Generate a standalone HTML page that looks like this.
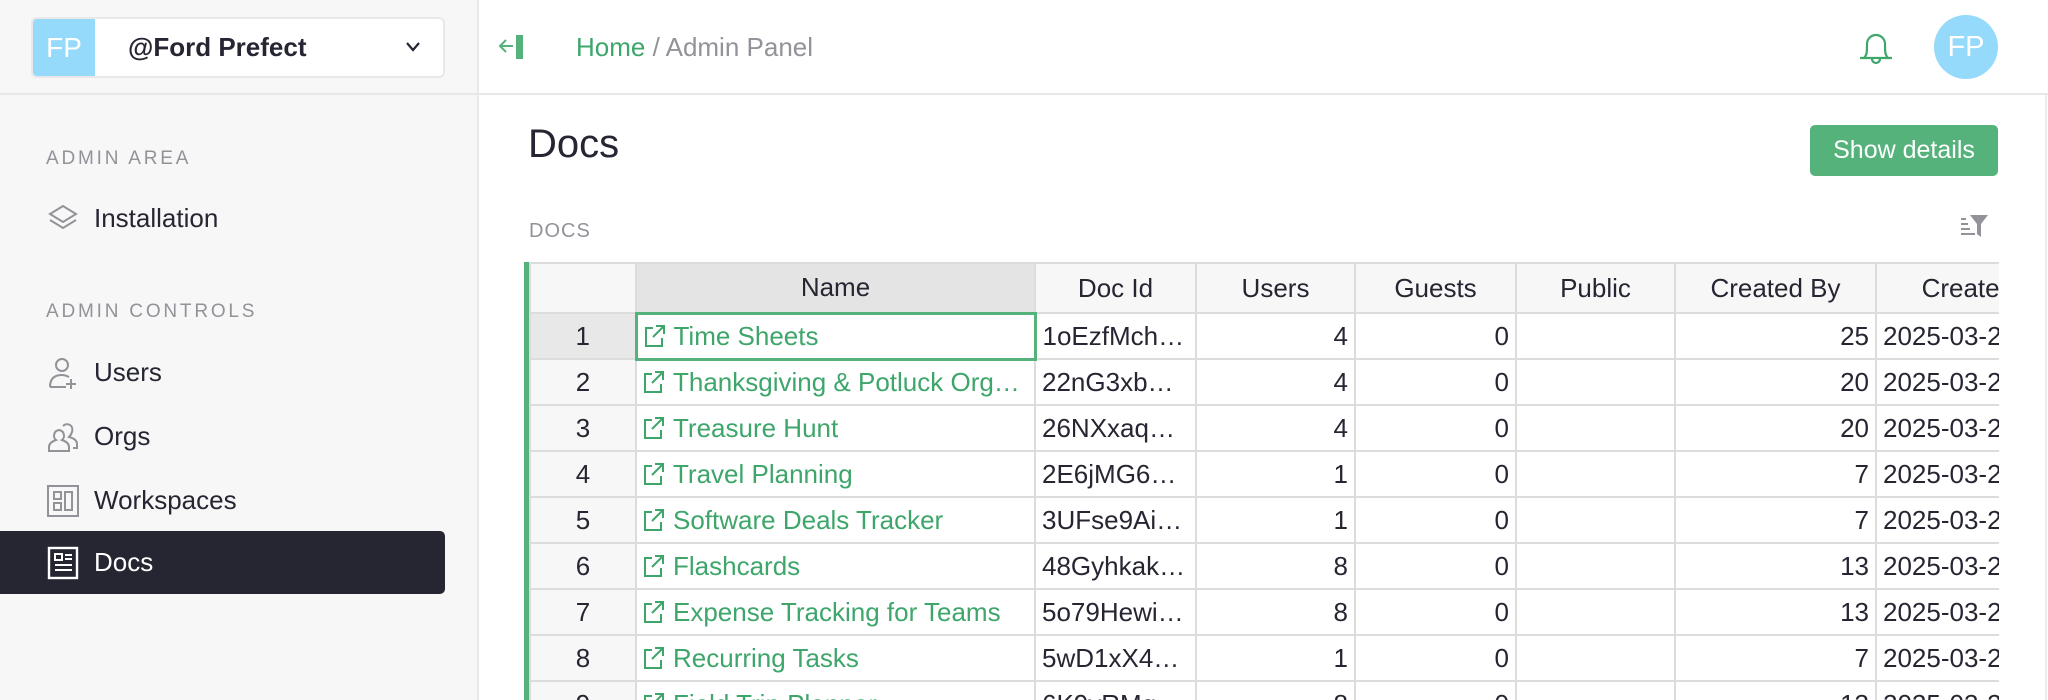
<!DOCTYPE html>
<html><head><meta charset="utf-8"><style>
*{box-sizing:border-box;margin:0;padding:0}
body{width:2048px;height:700px;overflow:hidden;background:#fff;font-family:"Liberation Sans",sans-serif;color:#262633;position:relative}
.abs{position:absolute}
#side{left:0;top:0;width:479px;height:700px;background:#f7f7f7;border-right:2px solid #e8e8e8}
.hdrline{left:0;top:93px;width:2048px;height:2px;background:#e8e8e8}
.sec{font-size:19px;letter-spacing:2.8px;color:#929299;left:46px}
.item{left:0;width:445px;height:63px;font-size:26px;display:flex;align-items:center;padding-left:46px}
.item svg{width:34px;height:34px;margin-right:14px}
.item.act{background:#262633;color:#fff;border-radius:0 5px 5px 0}
table{position:absolute;left:0;top:0;border-collapse:collapse;table-layout:fixed;font-size:26px}
td,th{border:2px solid #dcdcdc;height:46px;white-space:nowrap;overflow:hidden;padding:0 6px;font-weight:normal}
th{background:#f7f7f7;height:50px;border-top:2px solid #dcdcdc}
td.n{background:#f7f7f7;text-align:center}
td.r{text-align:right}
td.g{color:#3ea66b}
td.g svg{width:22px;height:24px;vertical-align:-3px;margin-right:8px}
</style></head><body>
<div id="side" class="abs"></div>
<div class="abs hdrline"></div>
<div class="abs" style="left:2045px;top:95px;width:2px;height:605px;background:#ececec"></div>
<div class="abs" style="left:31px;top:17px;width:414px;height:61px;background:#fff;border:2px solid #e8e8e8;border-radius:6px;overflow:hidden">
<div class="abs" style="left:0;top:0;width:62px;height:57px;background:#95d9fb;color:#fff;font-size:28px;line-height:57px;text-align:center">FP</div>
<div class="abs" style="left:95px;top:0;line-height:57px;font-size:26px;font-weight:bold;color:#262633">@Ford Prefect</div>
<svg class="abs" style="left:372px;top:22px" width="16" height="12" viewBox="0 0 16 12"><path d="M2 2l6 7 6-7" fill="none" stroke="#262633" stroke-width="2.2"/></svg>
</div>
<svg class="abs" style="left:498px;top:34px" width="28" height="26" viewBox="0 0 28 26"><path d="M3 12h12M8 6l-6 6 6 6" fill="none" stroke="#55b27b" stroke-width="2"/><rect x="18" y="1" width="7" height="24" fill="#55b27b"/></svg>
<div class="abs" style="left:576px;top:32px;font-size:26px;color:#929299"><span style="color:#3ea66b">Home</span> / Admin Panel</div>
<svg class="abs" style="left:1856px;top:28px" width="40" height="38" viewBox="0 0 40 38"><path d="M4 30h32M8 30c3-3 3-6 3-14a9 9 0 0 1 18 0c0 8 0 11 3 14M16 31a4 4 0 0 0 8 0" fill="none" stroke="#3ea66b" stroke-width="2.2"/></svg>
<div class="abs" style="left:1934px;top:15px;width:64px;height:64px;border-radius:50%;background:#95d9fb;color:#fff;font-size:29px;line-height:64px;text-align:center">FP</div>
<div class="abs sec" style="top:148px">ADMIN AREA</div>
<div class="abs item" style="top:187px"><svg viewBox="0 0 34 34"><path d="M17 4L4 12l13 8 13-8zM4 18l13 8 13-8" fill="none" stroke="#929299" stroke-width="2"/></svg>Installation</div>
<div class="abs sec" style="top:301px">ADMIN CONTROLS</div>
<div class="abs item" style="top:341px"><svg viewBox="0 0 34 34"><circle cx="16" cy="9" r="6" fill="none" stroke="#929299" stroke-width="2"/><path d="M4 31c0-8 4-12 12-12 3 0 5 1 7 2M4 31h16M25 23v10M20 28h10" fill="none" stroke="#929299" stroke-width="2"/></svg>Users</div>
<div class="abs item" style="top:405px"><svg viewBox="0 0 34 34"><path d="M3 31v-4c0-4 4-6 7-7-3-2-3-9 3-10 6 1 6 8 3 10 3 1 7 3 7 7v4zM17 6c4-4 11-1 9 6-1 3-2 4-3 5 4 1 8 3 8 7v4h-4" fill="none" stroke="#929299" stroke-width="2"/></svg>Orgs</div>
<div class="abs item" style="top:469px"><svg viewBox="0 0 34 34"><rect x="2" y="2" width="30" height="30" fill="none" stroke="#929299" stroke-width="2"/><rect x="8" y="8" width="7" height="7" fill="none" stroke="#929299" stroke-width="2"/><rect x="8" y="19" width="7" height="7" fill="none" stroke="#929299" stroke-width="2"/><rect x="19" y="8" width="7" height="18" fill="none" stroke="#929299" stroke-width="2"/></svg>Workspaces</div>
<div class="abs item act" style="top:531px"><svg viewBox="0 0 34 34"><rect x="3" y="2" width="28" height="30" fill="none" stroke="#fff" stroke-width="2.4"/><rect x="9" y="8" width="7" height="6" fill="none" stroke="#fff" stroke-width="2"/><path d="M19 9h7M19 13h7M9 19h17M9 24h17" stroke="#fff" stroke-width="2"/></svg>Docs</div>
<div class="abs" style="left:528px;top:122px;font-size:40px;font-weight:500">Docs</div>
<div class="abs" style="left:1810px;top:125px;width:188px;height:51px;background:#55b27b;border-radius:5px;color:#fff;font-size:25px;line-height:51px;text-align:center">Show details</div>
<div class="abs" style="left:529px;top:220px;font-size:20px;color:#929299;letter-spacing:1px">DOCS</div>
<svg class="abs" style="left:1960px;top:214px" width="30" height="26" viewBox="0 0 30 26"><path d="M1 5h5M1 10h7M1 15h9M1 20h14" stroke="#929299" stroke-width="2"/><path d="M10 1h18l-7 9v13l-4-3V10z" fill="#929299"/></svg>
<div class="abs" style="left:524px;top:262px;width:5px;height:438px;background:#55b27b"></div>
<div class="abs" style="left:529px;top:262px;width:1470px;height:438px;overflow:hidden">
<table style="width:1560px">
<colgroup><col style="width:106px"><col style="width:399px"><col style="width:161px"><col style="width:159px"><col style="width:161px"><col style="width:159px"><col style="width:201px"><col style="width:214px"></colgroup>
<tr><th></th><th style="background:#e4e4e4">Name</th><th>Doc Id</th><th>Users</th><th>Guests</th><th>Public</th><th>Created By</th><th>Created At</th></tr>
<tr><td class="n" style="background:#e8e8e8">1</td><td class="g" style="border:3px solid #55b27b"><svg viewBox="0 0 22 24"><path d="M9 4H2v18h16v-8M12 2h8v8M20 2L9 13" fill="none" stroke="#3ea66b" stroke-width="2"/></svg>Time Sheets</td><td>1oEzfMch…</td><td class="r">4</td><td class="r">0</td><td></td><td class="r">25</td><td>2025-03-2</td></tr>
<tr><td class="n">2</td><td class="g"><svg viewBox="0 0 22 24"><path d="M9 4H2v18h16v-8M12 2h8v8M20 2L9 13" fill="none" stroke="#3ea66b" stroke-width="2"/></svg>Thanksgiving &amp; Potluck Org…</td><td>22nG3xb…</td><td class="r">4</td><td class="r">0</td><td></td><td class="r">20</td><td>2025-03-2</td></tr>
<tr><td class="n">3</td><td class="g"><svg viewBox="0 0 22 24"><path d="M9 4H2v18h16v-8M12 2h8v8M20 2L9 13" fill="none" stroke="#3ea66b" stroke-width="2"/></svg>Treasure Hunt</td><td>26NXxaq…</td><td class="r">4</td><td class="r">0</td><td></td><td class="r">20</td><td>2025-03-2</td></tr>
<tr><td class="n">4</td><td class="g"><svg viewBox="0 0 22 24"><path d="M9 4H2v18h16v-8M12 2h8v8M20 2L9 13" fill="none" stroke="#3ea66b" stroke-width="2"/></svg>Travel Planning</td><td>2E6jMG6…</td><td class="r">1</td><td class="r">0</td><td></td><td class="r">7</td><td>2025-03-2</td></tr>
<tr><td class="n">5</td><td class="g"><svg viewBox="0 0 22 24"><path d="M9 4H2v18h16v-8M12 2h8v8M20 2L9 13" fill="none" stroke="#3ea66b" stroke-width="2"/></svg>Software Deals Tracker</td><td>3UFse9Ai…</td><td class="r">1</td><td class="r">0</td><td></td><td class="r">7</td><td>2025-03-2</td></tr>
<tr><td class="n">6</td><td class="g"><svg viewBox="0 0 22 24"><path d="M9 4H2v18h16v-8M12 2h8v8M20 2L9 13" fill="none" stroke="#3ea66b" stroke-width="2"/></svg>Flashcards</td><td>48Gyhkak…</td><td class="r">8</td><td class="r">0</td><td></td><td class="r">13</td><td>2025-03-2</td></tr>
<tr><td class="n">7</td><td class="g"><svg viewBox="0 0 22 24"><path d="M9 4H2v18h16v-8M12 2h8v8M20 2L9 13" fill="none" stroke="#3ea66b" stroke-width="2"/></svg>Expense Tracking for Teams</td><td>5o79Hewi…</td><td class="r">8</td><td class="r">0</td><td></td><td class="r">13</td><td>2025-03-2</td></tr>
<tr><td class="n">8</td><td class="g"><svg viewBox="0 0 22 24"><path d="M9 4H2v18h16v-8M12 2h8v8M20 2L9 13" fill="none" stroke="#3ea66b" stroke-width="2"/></svg>Recurring Tasks</td><td>5wD1xX4…</td><td class="r">1</td><td class="r">0</td><td></td><td class="r">7</td><td>2025-03-2</td></tr>
<tr><td class="n">9</td><td class="g"><svg viewBox="0 0 22 24"><path d="M9 4H2v18h16v-8M12 2h8v8M20 2L9 13" fill="none" stroke="#3ea66b" stroke-width="2"/></svg>Field Trip Planner</td><td>6K9yRMg…</td><td class="r">8</td><td class="r">0</td><td></td><td class="r">13</td><td>2025-03-2</td></tr>
</table>
</div>
</body></html>
